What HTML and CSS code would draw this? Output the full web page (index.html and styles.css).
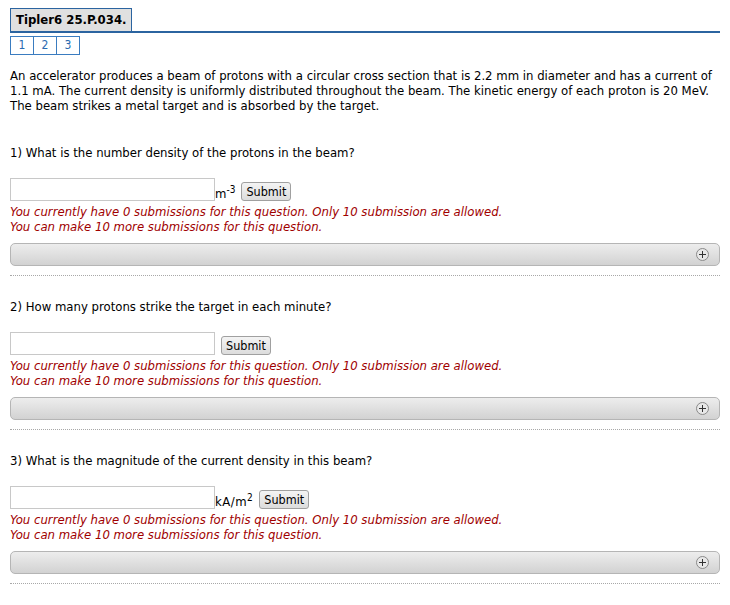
FILE: index.html
```html
<!DOCTYPE html>
<html>
<head>
<meta charset="utf-8">
<link rel="stylesheet" href="styles.css">
</head>
<body>
<div class="page">
  <div class="tabbar"><div class="tab">Tipler6 25.P.034.</div></div>
  <div class="pager"><span class="pg">1</span><span class="pg">2</span><span class="pg">3</span></div>
  <p class="intro">An accelerator produces a beam of protons with a circular cross section that is 2.2 mm in diameter and has a current of 1.1 mA. The current density is uniformly distributed throughout the beam. The kinetic energy of each proton is 20 MeV. The beam strikes a metal target and is absorbed by the target.</p>

  <div class="q">
    <p class="qtext">1) What is the number density of the protons in the beam?</p>
    <div class="answer"><input class="inp" type="text"><span class="unit">m<sup>-3</sup></span><button class="btn">Submit</button></div>
    <p class="note">You currently have 0 submissions for this question. Only 10 submission are allowed.<br>You can make 10 more submissions for this question.</p>
    <div class="bar"><span class="plus"></span></div>
    <div class="sep"></div>
  </div>

  <div class="q">
    <p class="qtext">2) How many protons strike the target in each minute?</p>
    <div class="answer"><input class="inp" type="text"><span class="unit"></span><button class="btn">Submit</button></div>
    <p class="note">You currently have 0 submissions for this question. Only 10 submission are allowed.<br>You can make 10 more submissions for this question.</p>
    <div class="bar"><span class="plus"></span></div>
    <div class="sep"></div>
  </div>

  <div class="q">
    <p class="qtext">3) What is the magnitude of the current density in this beam?</p>
    <div class="answer"><input class="inp" type="text"><span class="unit unit-wide">kA/m<sup>2</sup></span><button class="btn">Submit</button></div>
    <p class="note">You currently have 0 submissions for this question. Only 10 submission are allowed.<br>You can make 10 more submissions for this question.</p>
    <div class="bar"><span class="plus"></span></div>
    <div class="sep"></div>
  </div>
</div>
</body>
</html>
```
FILE: styles.css
```css
body {
  margin: 0;
  background: #fff;
  font-family: "DejaVu Sans Condensed", "DejaVu Sans", sans-serif;
  font-size: 13px;
  color: #000;
}
.page {
  padding: 8px 10px 0 10px;
}
.tabbar {
  border-bottom: 2px solid #2b64a0;
  display: flex;
}
.tab {
  background: #e0e0e0;
  border: 1px solid #2b64a0;
  border-bottom: none;
  font-weight: bold;
  font-size: 13px;
  padding: 2px 5px 2px 5px;
  line-height: 18px;
}
.pager {
  display: flex;
  margin-top: 3px;
}
.pg {
  width: 22px;
  height: 17px;
  border: 1px solid #3a7cc0;
  margin-right: -1px;
  color: #2a6ab0;
  text-align: center;
  line-height: 17px;
  font-size: 12px;
}
.intro {
  margin: 13px 0 32px 0;
  line-height: 15px;
}
.q {
  margin-top: 23px;
}
.qtext {
  margin: 0;
  line-height: 15px;
}
.answer {
  display: flex;
  align-items: flex-end;
  margin-top: 18px;
}
.inp {
  width: 201px;
  height: 19px;
  border: 1px solid #c8c8c8;
  padding: 1px;
  margin: 0;
}
.unit {
  line-height: 15px;
  margin-right: 4px;
}
.unit-wide {
  letter-spacing: 0.5px;
}
.unit sup { font-size: 10px; line-height: 0; }
.btn {
  font-family: inherit;
  font-size: 12.5px;
  height: 19px;
  padding: 0 4px;
  border: 1px solid #a0a0a0;
  border-radius: 3px;
  background: linear-gradient(#f4f4f4, #dcdcdc);
  margin-left: 2px;
  color: #000;
}
.note {
  margin: 3px 0 0 0;
  color: #a00000;
  font-style: italic;
  line-height: 15px;
}
.bar {
  margin-top: 9px;
  height: 21px;
  border: 1px solid #b5b5b5;
  border-radius: 5px;
  background: linear-gradient(#ededed, #d2d2d2);
  display: flex;
  align-items: center;
  justify-content: flex-end;
  padding-right: 10px;
}
.plus {
  position: relative;
  width: 11px;
  height: 11px;
  border: 1px solid #8a8a8a;
  border-radius: 50%;
  background: #e8e8e8;
}
.plus::before, .plus::after {
  content: "";
  position: absolute;
  background: #333;
}
.plus::before { left: 2px; right: 2px; top: 5px; height: 1px; }
.plus::after { top: 2px; bottom: 2px; left: 5px; width: 1px; }
.sep {
  margin-top: 9px;
  border-top: 1px dotted #a8a8a8;
}
```
